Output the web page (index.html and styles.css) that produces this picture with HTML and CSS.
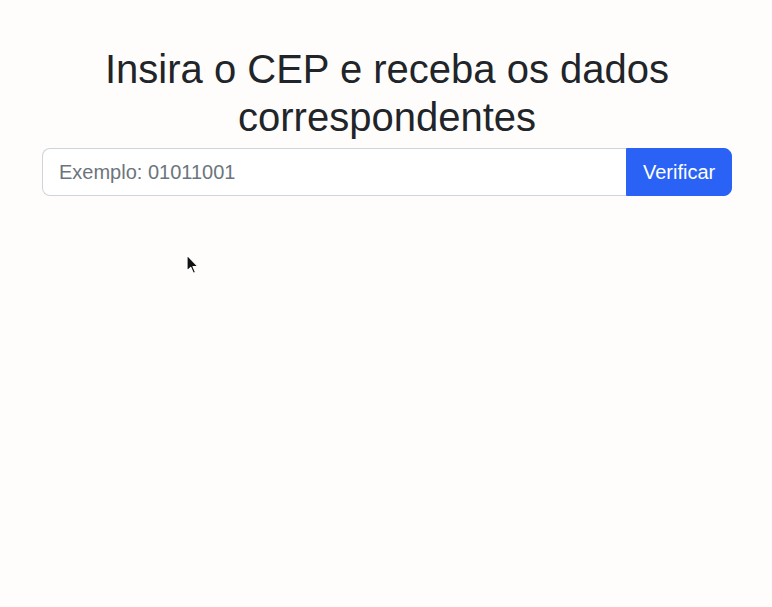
FILE: index.html
```html
<!DOCTYPE html>
<html lang="pt-BR">
<head>
<meta charset="utf-8">
<title>Consulta CEP</title>
<link rel="stylesheet" href="styles.css">
</head>
<body>
<main class="container">
  <h1 class="title">Insira o CEP e receba os dados correspondentes</h1>
  <form class="input-group" onsubmit="return false">
    <input class="cep-input" type="text" placeholder="Exemplo: 01011001">
    <button class="btn-verify" type="submit">Verificar</button>
  </form>
</main>
<svg class="cursor" width="14" height="22" viewBox="0 0 14 22" aria-hidden="true">
  <path d="M1 1 L1 17 L4.8 13.4 L7.4 19.4 L9.6 18.4 L7 12.6 L12 12.6 Z" fill="#111" stroke="#fff" stroke-width="1.2" stroke-linejoin="round"/>
</svg>
</body>
</html>
```
FILE: styles.css
```css
* { box-sizing: border-box; }
html, body { margin: 0; padding: 0; }
body {
  background: #fffdfc;
  font-family: "Liberation Sans", Arial, sans-serif;
  color: #212529;
  width: 772px;
  height: 607px;
  position: relative;
  overflow: hidden;
}
.container {
  width: 690px;
  margin-left: 42px;
  padding-top: 45px;
}
.title {
  margin: 0 0 7px;
  font-size: 40px;
  font-weight: 400;
  line-height: 48px;
  text-align: center;
}
.input-group {
  display: flex;
  margin: 0;
  height: 48px;
}
.cep-input {
  flex: 1;
  min-width: 0;
  height: 48px;
  padding: 8px 16px;
  font-family: inherit;
  font-size: 20px;
  color: #212529;
  background: #fff;
  border: 1px solid #ced4da;
  border-right: none;
  border-radius: 8px 0 0 8px;
  outline: none;
}
.cep-input::placeholder { color: #6c757d; opacity: 1; }
.btn-verify {
  width: 106px;
  height: 48px;
  padding: 8px 16px;
  font-family: inherit;
  font-size: 20px;
  color: #fff;
  background: #2962f4;
  border: 1px solid #2962f4;
  border-radius: 0 8px 8px 0;
  cursor: pointer;
}
.cursor {
  position: absolute;
  left: 186px;
  top: 254px;
}
```
